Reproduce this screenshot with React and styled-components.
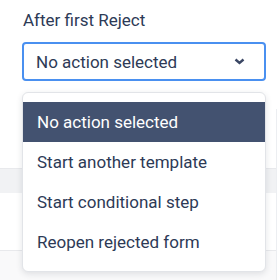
import React from "react";
import styled, { createGlobalStyle } from "styled-components";

const GlobalStyle = createGlobalStyle`
    html, body {
        margin: 0;
        padding: 0;
        background: #ffffff;
        font-family: Roboto, "Liberation Sans", sans-serif;
        color: #2d3a56;
    }
`;

const Page = styled.div`
    position: relative;
    width: 277px;
    height: 280px;
    overflow: hidden;
`;

const Field = styled.div`
    display: flex;
    flex-direction: column;
    padding: 9px 11px 0 22px;
`;

const Label = styled.label`
    font-size: 17px;
    line-height: 22px;
    margin-left: 1px;
    margin-bottom: 11px;
`;

const SelectBox = styled.div`
    display: flex;
    align-items: center;
    justify-content: space-between;
    box-sizing: border-box;
    height: 39px;
    padding: 0 19px 0 12px;
    border: 2px solid #4a90f0;
    border-radius: 4px;
    font-size: 17px;
    color: #2d3a56;
`;

const Backdrop = styled.div`
    display: flex;
    flex-direction: column;
    margin-top: 28px;
    border-right: 1px solid #eceef1;
`;

const BackRow = styled.div`
    height: ${(p) => p.h}px;
    background: ${(p) => p.bg || "transparent"};
    border-bottom: ${(p) => (p.line ? "1px solid #e8e9ec" : "none")};
`;

const Menu = styled.ul`
    position: absolute;
    top: 92px;
    left: 22px;
    width: 244px;
    box-sizing: border-box;
    margin: 0;
    padding: 9px 0;
    list-style: none;
    background: #ffffff;
    border: 1px solid #e2e4e8;
    border-radius: 6px;
    box-shadow: 0 2px 6px rgba(30, 40, 60, 0.12);
`;

const Item = styled.li`
    height: 40px;
    display: flex;
    align-items: center;
    padding-left: 14px;
    font-size: 17px;
    color: ${(p) => (p.active ? "#ffffff" : "#2d3a56")};
    background: ${(p) => (p.active ? "#435270" : "transparent")};
`;

const Chevron = () => (
    <svg width="11" height="7" viewBox="0 0 11 7">
        <path d="M1.5 1.5 L5.5 5 L9.5 1.5" fill="none" stroke="#3b4764" strokeWidth="2.4" />
    </svg>
);

const options = [
    "No action selected",
    "Start another template",
    "Start conditional step",
    "Reopen rejected form",
];

const App = () => {
    const [selected] = React.useState(0);

    return (
        <Page>
            <GlobalStyle />
            <Field>
                <Label>After first Reject</Label>
                <SelectBox>
                    <span>{options[selected]}</span>
                    <Chevron />
                </SelectBox>
            </Field>
            <Backdrop>
                <BackRow h={1} />
                <BackRow h={58} line />
                <BackRow h={24} bg="#f1f2f4" />
                <BackRow h={57} line />
                <BackRow h={40} bg="#f9f9fa" />
            </Backdrop>
            <Menu>
                {options.map((o, i) => (
                    <Item key={o} active={i === selected}>{o}</Item>
                ))}
            </Menu>
        </Page>
    );
};

export default App;
